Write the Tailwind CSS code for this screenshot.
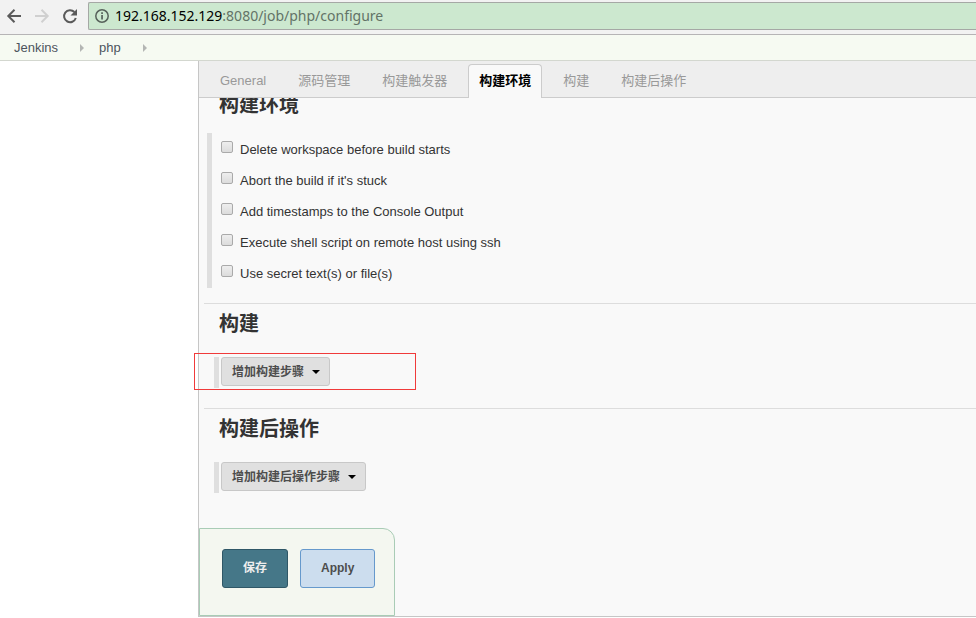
<!DOCTYPE html>
<html lang="zh-CN">
<head>
    <meta charset="UTF-8">
    <meta name="viewport" content="width=device-width, initial-scale=1.0">
    <title>php Config [Jenkins]</title>
    <script src="https://cdn.jsdelivr.net/npm/@tailwindcss/browser@4"></script>
</head>
<body class="flex flex-col min-h-screen bg-white text-[13px] text-[#333] font-['Liberation_Sans','Noto_Sans_CJK_SC',sans-serif]">
    <!-- Browser toolbar -->
    <header class="flex items-start h-[35px] pt-0.5 bg-[#f2f2f2] border-b border-[#b6b4b6]">
        <div class="flex items-center h-7 gap-3 pl-1.5 pr-2.5 text-[#5a5a5a]">
            <button type="button" aria-label="Back">
                <svg class="block w-4 h-4" viewBox="0 0 16 16" fill="none" stroke="currentColor" stroke-width="2"><path d="M15 8H2.5M8.5 1.8 2.3 8l6.2 6.2"/></svg>
            </button>
            <button type="button" aria-label="Forward" class="text-[#d0d0d0]" disabled>
                <svg class="block w-4 h-4" viewBox="0 0 16 16" fill="none" stroke="currentColor" stroke-width="2"><path d="M1 8h12.5M7.5 1.8 13.7 8l-6.2 6.2"/></svg>
            </button>
            <button type="button" aria-label="Reload">
                <svg class="block w-4 h-4" viewBox="0 0 16 16"><path d="M13.8 10A6 6 0 1 1 12.4 4" fill="none" stroke="currentColor" stroke-width="2"/><path d="M15 1v6.5H8.500z" fill="currentColor"/></svg>
            </button>
        </div>
        <div class="flex flex-1 items-center h-7 gap-1.5 pl-1.5 bg-[#cce8cf] border border-r-0 border-[#a5a8a5] rounded-l-xs">
            <svg class="w-3.5 h-3.5" viewBox="0 0 14 14"><circle cx="7" cy="7" r="6.200" fill="none" stroke="#56615a" stroke-width="1.500"/><path d="M6.200 6h1.700v4.500H6.200zM6.200 3.200h1.700v1.700H6.200z" fill="#56615a"/></svg>
            <p class="text-sm leading-5 text-[#637367] font-['Noto_Sans',sans-serif]"><span class="text-black">192.168.152.129</span>:8080/job/php/configure</p>
        </div>
    </header>

    <!-- Breadcrumbs -->
    <nav class="flex items-center h-[26px] pl-3.5 bg-[#f6faf2] border-b border-[#d3d7cf] text-[#4d545d]">
        <a href="#">Jenkins</a>
        <svg class="w-1 h-2 ml-[22px] mr-[15px]" viewBox="0 0 4 8"><path d="M0 0l4 4-4 4z" fill="#b4b6b4"/></svg>
        <a href="#">php</a>
        <svg class="w-1 h-2 ml-[22px]" viewBox="0 0 4 8"><path d="M0 0l4 4-4 4z" fill="#b4b6b4"/></svg>
    </nav>

    <main class="flex flex-col ml-[198px] bg-[#f9f9f9] border-l border-b border-[#c6c6c6]">
        <!-- Section tabs -->
        <nav class="relative z-10 flex items-end gap-2.5 h-[37px] px-2.5 bg-[#eee] border-b border-[#ccc] text-[#999]">
            <a href="#general" class="h-8 px-2.5 leading-8 border-x border-transparent">General</a>
            <a href="#scm" class="h-8 px-2.5 leading-8 border-x border-transparent">源码管理</a>
            <a href="#triggers" class="h-8 px-2.5 leading-8 border-x border-transparent">构建触发器</a>
            <a href="#environment" class="h-[34px] -mb-px px-2.5 leading-8 bg-[#f9f9f9] border border-b-0 border-[#ccc] rounded-t font-bold text-black">构建环境</a>
            <a href="#build" class="h-8 px-2.5 leading-8 border-x border-transparent">构建</a>
            <a href="#post-build" class="h-8 px-2.5 leading-8 border-x border-transparent">构建后操作</a>
        </nav>

        <form>
            <section id="environment" class="ml-[5px] -mt-[5px] pb-[15px]">
                <h2 class="pl-[15px] text-xl leading-6 font-bold">构建环境</h2>
                <div class="ml-[3px] mt-4 border-l-5 border-[#dfdfdf]">
                    <label class="flex items-center h-[31px] gap-[7px] pl-[9px] leading-5">
                        <input type="checkbox" class="appearance-none w-3 h-3 mb-1 border border-[#aaa] rounded-xs bg-linear-to-b from-[#eee] to-[#dcdcdc] checked:bg-[#777]">
                        <span class="pt-0.5">Delete workspace before build starts</span>
                    </label>
                    <label class="flex items-center h-[31px] gap-[7px] pl-[9px] leading-5">
                        <input type="checkbox" class="appearance-none w-3 h-3 mb-1 border border-[#aaa] rounded-xs bg-linear-to-b from-[#eee] to-[#dcdcdc] checked:bg-[#777]">
                        <span class="pt-0.5">Abort the build if it's stuck</span>
                    </label>
                    <label class="flex items-center h-[31px] gap-[7px] pl-[9px] leading-5">
                        <input type="checkbox" class="appearance-none w-3 h-3 mb-1 border border-[#aaa] rounded-xs bg-linear-to-b from-[#eee] to-[#dcdcdc] checked:bg-[#777]">
                        <span class="pt-0.5">Add timestamps to the Console Output</span>
                    </label>
                    <label class="flex items-center h-[31px] gap-[7px] pl-[9px] leading-5">
                        <input type="checkbox" class="appearance-none w-3 h-3 mb-1 border border-[#aaa] rounded-xs bg-linear-to-b from-[#eee] to-[#dcdcdc] checked:bg-[#777]">
                        <span class="pt-0.5">Execute shell script on remote host using ssh</span>
                    </label>
                    <label class="flex items-center h-[31px] gap-[7px] pl-[9px] leading-5">
                        <input type="checkbox" class="appearance-none w-3 h-3 mb-1 border border-[#aaa] rounded-xs bg-linear-to-b from-[#eee] to-[#dcdcdc] checked:bg-[#777]">
                        <span class="pt-0.5">Use secret text(s) or file(s)</span>
                    </label>
                </div>
            </section>

            <section id="build" class="ml-[5px] pt-2 pb-5 border-t border-[#ddd]">
                <h2 class="pl-[15px] text-xl leading-6 font-bold">构建</h2>
                <div class="relative ml-2.5 mt-[21px] h-[31px] pl-0.5 border-l-5 border-[#dfdfdf]">
                    <button type="button" class="flex items-center gap-2 h-[29px] pl-2.5 pr-[9px] bg-[#e0e0e0] border border-[#c8c8c8] rounded-[3px] text-xs font-bold text-[#4d4d4d]">
                        增加构建步骤
                        <svg class="w-2 h-1" viewBox="0 0 8 4"><path d="M0 0h8L4 4z" fill="#000"/></svg>
                    </button>
                    <div class="absolute -left-[25px] -top-1 w-[222px] h-[37px] border border-[#f03a3a] pointer-events-none"></div>
                </div>
            </section>

            <section id="post-build" class="ml-[5px] pt-2 pb-[35px] border-t border-[#ddd]">
                <h2 class="pl-[15px] text-xl leading-6 font-bold">构建后操作</h2>
                <div class="ml-2.5 mt-[21px] h-[31px] pl-0.5 border-l-5 border-[#dfdfdf]">
                    <button type="button" class="flex items-center gap-2 h-[29px] pl-2.5 pr-[9px] bg-[#e0e0e0] border border-[#c8c8c8] rounded-[3px] text-xs font-bold text-[#4d4d4d]">
                        增加构建后操作步骤
                        <svg class="w-2 h-1" viewBox="0 0 8 4"><path d="M0 0h8L4 4z" fill="#000"/></svg>
                    </button>
                </div>
            </section>

            <!-- Save / apply -->
            <div class="flex w-fit gap-3 pt-5 pb-[27px] pl-[22px] pr-[19px] bg-[#f4f7f0] border border-[#a9ccb6] rounded-tr-xl">
                <button type="submit" class="h-[39px] px-5 pb-0.5 bg-[#457788] border border-[#2f5767] rounded-[3px] text-xs font-bold text-[#eee]">保存</button>
                <button type="button" class="h-[39px] px-5 pb-0.5 bg-[#ccddee] border border-[#6699cc] rounded-[3px] text-xs font-bold text-[#4d4d4d]">Apply</button>
            </div>
        </form>
    </main>
</body>
</html>
